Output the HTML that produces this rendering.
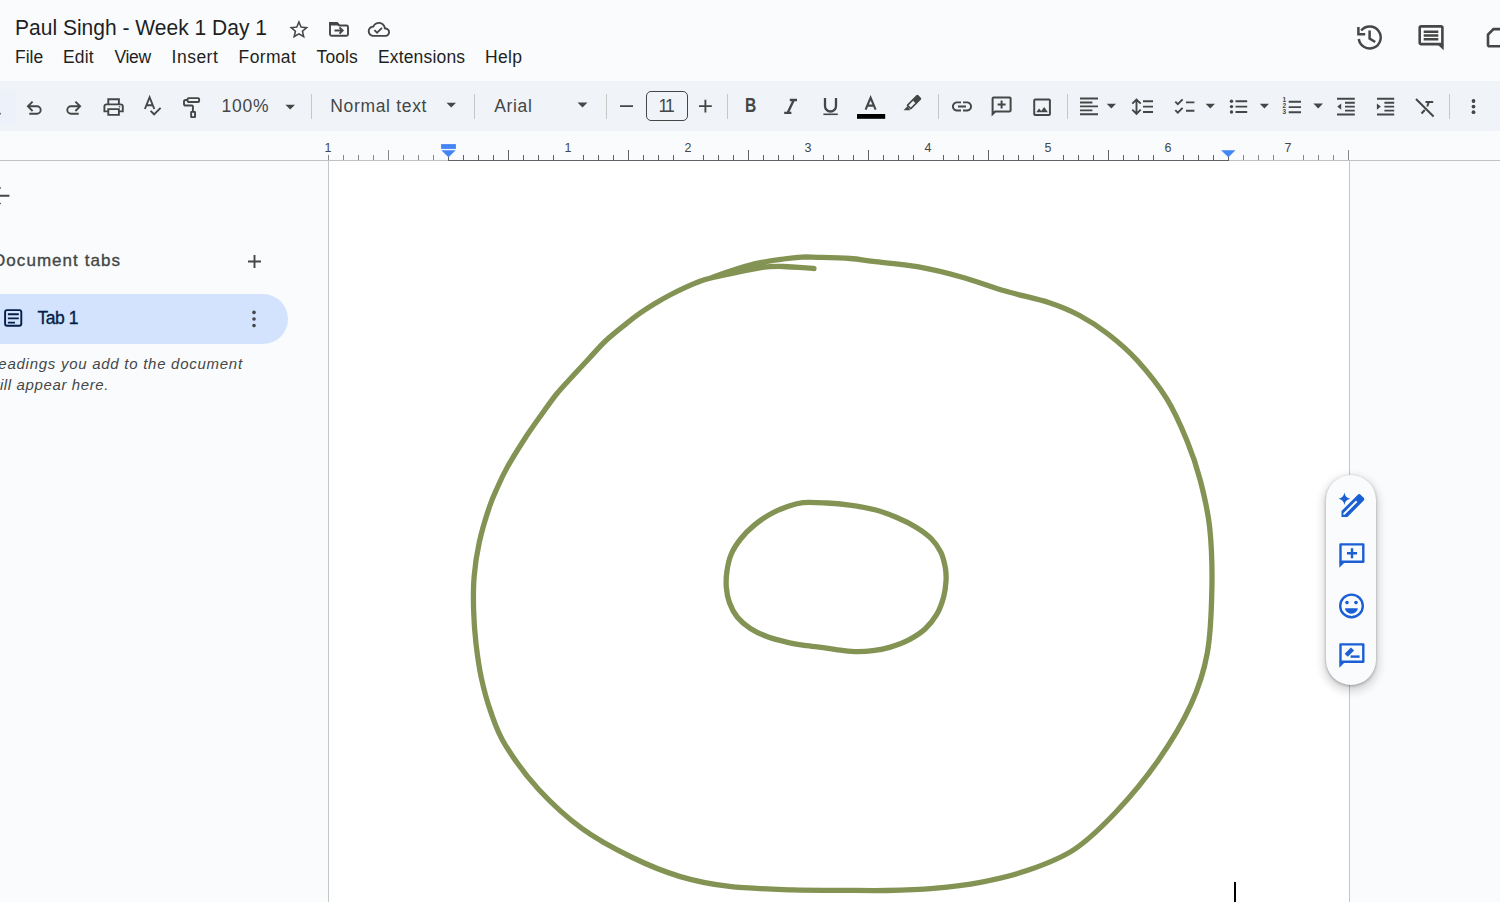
<!DOCTYPE html>
<html lang="en"><head><meta charset="utf-8"><title>Paul Singh - Week 1 Day 1</title>
<style>
html,body{margin:0;padding:0}
body{width:1500px;height:902px;overflow:hidden;position:relative;background:#f9fbfd;font-family:"Liberation Sans",sans-serif;color:#1f1f1f}
.a{position:absolute;white-space:nowrap;line-height:1}
svg{position:absolute;overflow:visible}
.ic{fill:#444746}
#title{left:14.5px;top:16px;font-size:22.5px;color:#1f1f1f}
.m{top:49px;font-size:17.5px;color:#1f1f1f}
#tb{left:-30px;top:81px;width:1560px;height:50px;background:#f0f4f9;border-radius:25px}
.tt{font-size:17.5px;color:#444746;top:98px}
.sep{width:1px;height:25px;top:94px;background:#c7c7c7}
.num{font-size:12.5px;color:#444746;top:142px;width:20px;text-align:center}
</style></head><body>
<!-- header -->
<div class="a t" id="t_title" style="left:14.800px;top:17px;font-size:22.500px;transform:scaleX(.934);transform-origin:0 0">Paul Singh - Week 1 Day 1</div>
<div class="a t m" id="t_file" style="left:15.00px;letter-spacing:0.000px">File</div>
<div class="a t m" id="t_edit" style="left:62.90px;letter-spacing:0.199px">Edit</div>
<div class="a t m" id="t_view" style="left:114.40px;letter-spacing:-0.267px">View</div>
<div class="a t m" id="t_insert" style="left:171.60px;letter-spacing:0.480px">Insert</div>
<div class="a t m" id="t_format" style="left:238.60px;letter-spacing:0.360px">Format</div>
<div class="a t m" id="t_tools" style="left:316.60px;letter-spacing:0.100px">Tools</div>
<div class="a t m" id="t_ext" style="left:377.90px;letter-spacing:0.177px">Extensions</div>
<div class="a t m" id="t_help" style="left:485.00px;letter-spacing:0.333px">Help</div>
<!-- toolbar -->
<div class="a" id="tb"></div>
<div class="a" style="left:-20px;top:89px;width:36.200px;height:34.800px;background:#edf2fa;border-radius:2px"></div>
<div class="a t tt" id="t_zoom" style="left:221.40px;letter-spacing:0.800px">100%</div>
<div class="a t tt" id="t_normal" style="left:330.20px;letter-spacing:0.680px">Normal text</div>
<div class="a t tt" id="t_arial" style="left:494.20px;letter-spacing:0.650px">Arial</div>
<div class="a sep" style="left:311px"></div>
<div class="a sep" style="left:474px"></div>
<div class="a sep" style="left:606px"></div>
<div class="a sep" style="left:727px"></div>
<div class="a sep" style="left:938px"></div>
<div class="a sep" style="left:1067px"></div>
<div class="a sep" style="left:1449px"></div>
<div class="a" style="left:646px;top:91px;width:42px;height:29.500px;border:1px solid #444746;border-radius:5px;box-sizing:border-box"></div>
<div class="a t tt" id="t_11" style="left:658.4px;letter-spacing:-1.7px">11</div>
<div class="a" style="left:745px;top:96.300px;font-size:19.500px;font-weight:bold;color:#444746;transform:scaleX(.80);transform-origin:0 0">B</div>
<div class="a" style="left:1282.5px;top:97px;font-size:6.5px;font-weight:bold;color:#444746;line-height:6.1px;white-space:normal;width:5px">1<br>2<br>3</div>
<!-- ruler -->
<div class="a" style="left:0;top:160px;width:1500px;height:1px;background:#c1c3c2"></div>
<div class="a" style="left:448px;top:160px;width:781px;height:1px;background:#5f6368"></div>
<svg id="ruler" style="left:0;top:0" width="1500" height="902" viewBox="0 0 1500 902" fill="none" stroke-width="1"><path d="M343.5 155 V160" stroke="#85888a"/><path d="M358.5 155 V160" stroke="#85888a"/><path d="M373.5 155 V160" stroke="#85888a"/><path d="M388.5 150 V160" stroke="#85888a"/><path d="M403.5 155 V160" stroke="#85888a"/><path d="M418.5 155 V160" stroke="#85888a"/><path d="M433.5 155 V160" stroke="#85888a"/><path d="M448.5 157 V160" stroke="#5f6368"/><path d="M463.5 155 V160" stroke="#5f6368"/><path d="M478.5 155 V160" stroke="#5f6368"/><path d="M493.5 155 V160" stroke="#5f6368"/><path d="M508.5 150 V160" stroke="#5f6368"/><path d="M523.5 155 V160" stroke="#5f6368"/><path d="M538.5 155 V160" stroke="#5f6368"/><path d="M553.5 155 V160" stroke="#5f6368"/><path d="M583.5 155 V160" stroke="#5f6368"/><path d="M598.5 155 V160" stroke="#5f6368"/><path d="M613.5 155 V160" stroke="#5f6368"/><path d="M628.5 150 V160" stroke="#5f6368"/><path d="M643.5 155 V160" stroke="#5f6368"/><path d="M658.5 155 V160" stroke="#5f6368"/><path d="M673.5 155 V160" stroke="#5f6368"/><path d="M703.5 155 V160" stroke="#5f6368"/><path d="M718.5 155 V160" stroke="#5f6368"/><path d="M733.5 155 V160" stroke="#5f6368"/><path d="M748.5 150 V160" stroke="#5f6368"/><path d="M763.5 155 V160" stroke="#5f6368"/><path d="M778.5 155 V160" stroke="#5f6368"/><path d="M793.5 155 V160" stroke="#5f6368"/><path d="M823.5 155 V160" stroke="#5f6368"/><path d="M838.5 155 V160" stroke="#5f6368"/><path d="M853.5 155 V160" stroke="#5f6368"/><path d="M868.5 150 V160" stroke="#5f6368"/><path d="M883.5 155 V160" stroke="#5f6368"/><path d="M898.5 155 V160" stroke="#5f6368"/><path d="M913.5 155 V160" stroke="#5f6368"/><path d="M943.5 155 V160" stroke="#5f6368"/><path d="M958.5 155 V160" stroke="#5f6368"/><path d="M973.5 155 V160" stroke="#5f6368"/><path d="M988.5 150 V160" stroke="#5f6368"/><path d="M1003.5 155 V160" stroke="#5f6368"/><path d="M1018.5 155 V160" stroke="#5f6368"/><path d="M1033.5 155 V160" stroke="#5f6368"/><path d="M1063.5 155 V160" stroke="#5f6368"/><path d="M1078.5 155 V160" stroke="#5f6368"/><path d="M1093.5 155 V160" stroke="#5f6368"/><path d="M1108.5 150 V160" stroke="#5f6368"/><path d="M1123.5 155 V160" stroke="#5f6368"/><path d="M1138.5 155 V160" stroke="#5f6368"/><path d="M1153.5 155 V160" stroke="#5f6368"/><path d="M1183.5 155 V160" stroke="#5f6368"/><path d="M1198.5 155 V160" stroke="#5f6368"/><path d="M1213.5 155 V160" stroke="#5f6368"/><path d="M1228.5 157 V160" stroke="#5f6368"/><path d="M1243.5 155 V160" stroke="#85888a"/><path d="M1258.5 155 V160" stroke="#85888a"/><path d="M1273.5 155 V160" stroke="#85888a"/><path d="M1303.5 155 V160" stroke="#85888a"/><path d="M1318.5 155 V160" stroke="#85888a"/><path d="M1333.5 155 V160" stroke="#85888a"/><path d="M1348.5 150 V160" stroke="#85888a"/><path d="M328.5 155V160" stroke="#85888a"/></svg>
<div class="a num" style="left:318px">1</div>
<div class="a num" style="left:558px">1</div>
<div class="a num" style="left:678px">2</div>
<div class="a num" style="left:798px">3</div>
<div class="a num" style="left:918px">4</div>
<div class="a num" style="left:1038px">5</div>
<div class="a num" style="left:1158px">6</div>
<div class="a num" style="left:1278px">7</div>
<!-- page -->
<div class="a" style="left:328px;top:161px;width:1022px;height:760px;background:#fff;border-left:1px solid #c4c7c5;border-right:1px solid #c4c7c5;box-sizing:border-box"></div>
<!-- sidebar -->
<div class="a" style="left:-40px;top:294px;width:328px;height:50px;border-radius:25px;background:#d3e3fd"></div>
<div class="a t" id="t_doctabs" style="left:-7px;top:252px;font-size:17px;color:#444746;-webkit-text-stroke:.35px #444746;letter-spacing:1.05px">Document tabs</div>
<div class="a t" id="t_tab1" style="left:37.40px;top:309.5px;font-size:17.5px;color:#041e49;-webkit-text-stroke:.35px #041e49;letter-spacing:-0.400px">Tab 1</div>
<div class="a t" id="t_h1" style="left:-13.21px;top:356.3px;font-size:15px;font-style:italic;color:#444746;letter-spacing:0.730px">Headings you add to the document</div>
<div class="a t" id="t_h2" style="left:-11.56px;top:377.3px;font-size:15px;font-style:italic;color:#444746;letter-spacing:0.622px">will appear here.</div>
<!-- drawing -->
<svg id="draw" style="left:0;top:0" width="1500" height="902" viewBox="0 0 1500 902" fill="none" stroke="#839353" stroke-width="5.3" stroke-linecap="round" stroke-linejoin="round">
<path d="M711.5 277.7C714.1 276.8 720.0 274.3 727.3 272.0C734.6 269.7 746.0 265.9 755.4 263.7C764.8 261.5 775.6 260.1 783.4 259.0C791.2 257.9 796.3 257.4 802.0 257.1C807.7 256.8 809.6 257.1 817.6 257.3C825.6 257.5 840.7 257.8 850.0 258.5C859.3 259.2 862.1 260.0 873.3 261.4C884.5 262.8 902.6 264.1 917.3 266.7C932.0 269.3 946.6 272.9 961.3 277.0C976.0 281.1 990.6 286.7 1005.3 291.0C1020.0 295.3 1037.1 298.7 1049.3 302.7C1061.5 306.7 1068.9 309.8 1078.7 315.0C1088.5 320.2 1098.2 326.4 1108.0 334.0C1117.8 341.6 1127.5 349.7 1137.3 360.5C1147.1 371.3 1158.4 385.2 1166.7 398.7C1175.0 412.1 1181.6 427.6 1187.2 441.2C1192.8 454.8 1196.5 465.7 1200.2 480.0C1203.9 494.3 1207.6 508.9 1209.6 526.8C1211.5 544.7 1212.3 566.6 1211.9 587.6C1211.5 608.6 1210.8 633.5 1207.3 653.0C1203.8 672.5 1199.1 686.6 1190.9 704.6C1182.7 722.6 1170.5 742.8 1158.0 760.7C1145.5 778.6 1130.0 797.2 1116.0 812.0C1102.0 826.8 1088.8 839.8 1074.0 849.6C1059.2 859.4 1042.6 865.2 1027.0 870.6C1011.4 876.0 996.0 879.3 980.4 882.3C964.8 885.3 949.2 887.0 933.6 888.4C918.0 889.8 902.4 890.2 886.8 890.5C871.2 890.8 855.6 890.4 840.0 890.3C824.4 890.2 811.5 890.5 793.0 889.9C774.5 889.2 748.1 888.6 729.3 886.4C710.5 884.2 696.6 881.5 680.3 876.6C664.0 871.7 647.7 865.0 631.3 857.0C614.9 849.0 597.3 839.7 581.8 828.4C566.3 817.1 551.3 803.2 538.5 789.3C525.7 775.4 513.2 757.8 505.2 744.8C497.2 731.8 494.5 722.2 490.5 711.0C486.5 699.8 483.6 688.5 481.2 677.3C478.8 666.0 477.3 654.8 476.0 643.5C474.7 632.2 473.9 621.0 473.6 609.8C473.3 598.5 473.2 587.2 474.2 576.0C475.1 564.8 476.8 553.8 479.3 542.3C481.8 530.8 486.3 516.2 489.4 507.0C492.4 497.8 494.6 493.7 497.6 487.0C500.6 480.3 502.8 475.2 507.4 467.0C512.0 458.8 519.7 446.5 525.2 438.0C530.7 429.5 535.3 423.3 540.5 416.0C545.7 408.7 551.2 400.7 556.6 394.0C562.0 387.3 567.5 381.8 573.0 375.8C578.5 369.8 584.0 363.9 589.5 358.0C595.0 352.1 599.9 346.2 606.0 340.5C612.1 334.8 620.3 328.4 626.0 323.9C631.7 319.3 635.2 316.6 640.0 313.2C644.8 309.8 650.0 306.5 655.0 303.5C660.0 300.5 665.0 297.6 670.0 295.0C675.0 292.4 680.0 290.0 685.0 287.7C690.0 285.4 695.7 282.9 700.0 281.3C704.3 279.7 706.5 279.1 711.0 278.0C715.5 276.9 718.7 276.2 727.0 274.5C735.3 272.8 751.6 268.8 761.0 267.5C770.4 266.2 774.6 266.3 783.4 266.5C792.2 266.7 808.9 268.2 814.0 268.5"/>
<path d="M803.1 502.6C809.6 502.0 818.6 502.6 826.4 503.0C834.1 503.4 841.5 504.0 849.6 505.1C857.7 506.2 867.1 507.8 874.9 509.8C882.7 511.8 889.4 514.4 896.2 517.2C903.0 520.1 909.8 523.4 915.6 526.9C921.4 530.4 926.9 534.3 931.1 538.5C935.3 542.7 938.4 547.2 940.8 552.1C943.2 557.0 944.4 562.8 945.3 567.6C946.2 572.5 946.3 576.4 946.0 581.2C945.7 586.1 945.2 591.2 943.7 596.7C942.2 602.2 940.0 608.8 936.9 614.1C933.8 619.4 929.8 624.5 925.3 628.7C920.8 632.9 915.6 636.2 909.8 639.3C904.0 642.4 896.5 645.2 890.4 647.1C884.2 649.0 878.4 649.9 872.9 650.6C867.4 651.4 862.2 651.6 857.4 651.6C852.5 651.6 849.0 651.2 843.8 650.6C838.6 650.0 832.5 648.9 826.4 648.1C820.3 647.3 813.5 646.7 807.0 645.7C800.5 644.7 794.1 643.8 787.6 642.3C781.1 640.8 774.4 639.3 768.2 637.0C762.1 634.7 755.9 632.0 750.7 628.7C745.5 625.4 740.8 621.4 737.2 617.0C733.7 612.6 731.2 607.5 729.4 602.5C727.6 597.5 726.7 592.2 726.3 587.0C725.9 581.8 726.1 577.0 726.9 571.5C727.7 566.0 728.9 559.5 731.3 554.0C733.6 548.5 737.1 543.4 741.0 538.5C744.9 533.6 749.8 528.9 754.6 524.9C759.5 520.9 764.6 517.3 770.1 514.2C775.6 511.1 782.1 508.4 787.6 506.5C793.1 504.6 796.6 503.2 803.1 502.6Z"/>
</svg>
<div class="a" style="left:1234.200px;top:882px;width:2px;height:20px;background:#000"></div>
<!-- floating pill -->
<div class="a" style="left:1326px;top:475px;width:50px;height:210px;border-radius:25px;background:#f9fbfd;box-shadow:0 1px 3px rgba(0,0,0,.3),0 4px 8px 3px rgba(0,0,0,.15)"></div>
<svg id="icons" style="left:0;top:0" width="1500" height="902" viewBox="0 0 1500 902">
<g fill="none" stroke="#444746" stroke-width="1.9">
<!-- back arrow (cut) -->
<path d="M-7 195.700H9.400M0.400 187.200L-8.100 195.700L0.400 204.200" stroke-width="2"/>
<!-- undo / redo -->
<path d="M32.6 101.6L27.9 106.3L32.6 111M28.2 106.3H37A3.7 3.7 0 0 1 37 113.7H29.3"/>
<path d="M75.4 101.6L80.1 106.3L75.4 111M79.8 106.3H71A3.7 3.7 0 0 0 71 113.7H78.7"/>
<!-- print -->
<path d="M108.3 104V99.2H118.9V104M108.3 111.4H104.4V106.6A2.2 2.2 0 0 1 106.6 104.4H120.6A2.2 2.2 0 0 1 122.8 106.6V111.4H118.9M108.3 109.1H118.9V114.9H108.3Z"/>
<!-- spellcheck -->
<path d="M144.9 109L149.6 97.2L154.3 109M146.6 105.2H152.6M150.6 110.9L154.1 114.3L160.6 107.8"/>
<!-- paint roller -->
<rect x="187.6" y="98.1" width="11.5" height="3.9" rx="1"/>
<path d="M187.6 100H185.6A1.6 1.6 0 0 0 184 101.600V103.900A1.600 1.600 0 0 0 185.600 105.500H191.900A1 1 0 0 1 192.900 106.500V111.500"/>
<rect x="191.150" y="111.900" width="3.900" height="5.200" rx="0.300"/>
<!-- minus / plus -->
<path d="M620 106.100H633M699 106.100H711.800M705.400 99.700V112.500"/>
<!-- italic -->
<path d="M789.800 100H797M784.200 112.900H791.400M793.800 100L787.600 112.900" stroke-width="2.400"/>
<!-- underline -->
<path d="M825 98V106A5.500 5.500 0 0 0 836 106V98" stroke-width="2.300"/><path d="M823.400 114.300H837.800" stroke-width="1.600"/>
<!-- A color -->
<path d="M865.600 109.600L870.600 97.800L875.600 109.600M867.300 105.600H873.900" stroke-width="2.100"/>
<!-- align -->
<path d="M1080 98.500H1098M1080 102.450H1092.400M1080 106.400H1098M1080 110.350H1092.400M1080 114.300H1098"/>
<!-- line spacing -->
<path d="M1136.500 100.500V112.800M1132.300 103.700L1136.500 99.500L1140.700 103.700M1132.300 109.600L1136.500 113.800L1140.700 109.600M1143 101.300H1153M1143 106.600H1153M1143 112H1153"/>
<!-- checklist -->
<path d="M1175.300 101.600L1177.800 104.100L1182.600 99.300M1175.300 110.100L1177.800 112.600L1182.600 107.800M1186 102.400H1194.400M1186 110.700H1194.400"/>
<!-- bullets -->
<path d="M1235.500 101.300H1247.200M1235.500 106.600H1247.200M1235.500 112H1247.200"/>
<!-- numbered -->
<path d="M1288.700 101.800H1301M1288.700 107.100H1301M1288.700 112.300H1301"/>
<!-- indent dec -->
<path d="M1337 98.700H1354.800M1337 114.500H1354.800M1345 102.700H1354.800M1345 106.600H1354.800M1345 110.600H1354.800"/>
<!-- indent inc -->
<path d="M1377 98.700H1394.200M1377 114.500H1394.200M1384.400 102.700H1394.200M1384.400 106.600H1394.200M1384.400 110.600H1394.200"/>
<!-- clear format -->
<path d="M1416 99L1433.600 116.500M1425.500 102H1433.200M1428.600 102.500L1427.300 106.500M1424.800 110L1421.500 113.500" stroke-width="2"/>
<!-- + sidebar -->
<path d="M248 261.500H261M254.500 255V268"/>
<!-- folder move -->
<path d="M330 23H337L339.300 25.500H346.500A1.500 1.500 0 0 1 348 27V34.200A1.500 1.500 0 0 1 346.500 35.700H331.500A1.500 1.500 0 0 1 330 34.200Z"/>
<path d="M334.500 30.500H342.500M339.500 27.300L342.700 30.500L339.500 33.700"/>
<!-- history -->
<path d="M1358.800 39A11 11 0 1 0 1361.200 30.500M1358.400 27V34.300H1365.200M1369.600 30.500V38.500L1375.200 42" stroke-width="2.500"/>
<!-- comment -->
<path d="M1421.200 26.400H1440.900A1.500 1.500 0 0 1 1442.400 27.900V44.100H1421.200A1.500 1.500 0 0 1 1419.700 42.600V27.900A1.500 1.500 0 0 1 1421.200 26.400Z" stroke-width="2.600"/>
<path d="M1423.700 31.700H1438.300M1423.700 35.500H1438.300M1423.700 39.200H1438.300" stroke-width="2.500"/>
<!-- meet partial -->
<path d="M1502 29.100H1493.500L1488 34.600V44.800A1.500 1.500 0 0 0 1489.500 46.300H1502" stroke-width="2.600"/>
</g>
<g fill="#444746">
<path d="M329.200 22.200H337.300L340 25.500H329.200Z"/>
<path d="M1437.500 44.500H1443.700V50.200Z"/>
<!-- dropdown arrows -->
<path d="M285.400 104.800H295L290.200 109.600Z"/>
<path d="M446.500 102.700H456L451.250 107.500Z"/>
<path d="M577.500 102.500H587.500L582.500 107.600Z"/>
<path d="M1106.700 103.700H1116L1111.350 108.600Z"/>
<path d="M1205.600 103.700H1215L1210.300 108.600Z"/>
<path d="M1259.800 103.700H1269L1264.400 108.600Z"/>
<path d="M1313.400 103.500H1323L1318.200 108.500Z"/>
<!-- indent triangles -->
<path d="M1337.300 106.600L1341.200 103.400V109.800Z"/>
<path d="M1380.800 106.600L1376.900 103.400V109.800Z"/>
<!-- bullets dots -->
<circle cx="1231.500" cy="101.300" r="1.700"/><circle cx="1231.500" cy="106.600" r="1.700"/><circle cx="1231.500" cy="112" r="1.700"/>
<!-- more vert -->
<circle cx="1473.500" cy="101" r="1.900"/><circle cx="1473.500" cy="106.600" r="1.900"/><circle cx="1473.500" cy="112.200" r="1.900"/>
<circle cx="254" cy="312.400" r="1.800"/><circle cx="254" cy="319" r="1.800"/><circle cx="254" cy="325.600" r="1.800"/>
<!-- printer dot -->
<circle cx="119.600" cy="106.800" r="0.800"/>
<!-- highlighter -->
<g transform="translate(908.5,107.6) rotate(-45)"><path fill-rule="evenodd" d="M1.2 -3.2H14.2A1.5 1.5 0 0 1 15.700 -1.700V1.700A1.500 1.500 0 0 1 14.200 3.200H1.200A1.200 1.200 0 0 1 0 2V-2A1.200 1.200 0 0 1 1.200 -3.200ZM1.700 -1.500V1.500H8.100V-1.500Z"/></g>
<path d="M903.600 110.300L907.300 106.300L910.300 110.300Z"/>
<!-- star -->
<path transform="translate(287.400,18.100) scale(0.96)" d="M22 9.240l-7.190-.620L12 2 9.190 8.630 2 9.240l5.460 4.730L5.820 21 12 17.270 18.180 21l-1.630-7.030L22 9.240zM12 15.400l-3.760 2.270 1-4.280-3.320-2.880 4.380-.380L12 6.100l1.710 4.040 4.380.380-3.320 2.880 1 4.280L12 15.400z"/>
<!-- cloud done -->
<path transform="translate(367.800,18.300) scale(0.925)" d="M19.350 10.040C18.670 6.590 15.640 4 12 4 9.110 4 6.600 5.640 5.350 8.040 2.340 8.360 0 10.910 0 14c0 3.310 2.690 6 6 6h13c2.760 0 5-2.240 5-5 0-2.640-2.050-4.780-4.650-4.960zM19 18H6c-2.210 0-4-1.790-4-4 0-2.050 1.530-3.760 3.560-3.970l1.070-.110.500-.950C8.080 7.140 9.940 6 12 6c2.620 0 4.880 1.860 5.390 4.430l.300 1.500 1.530.110c1.560.100 2.780 1.410 2.780 2.960 0 1.650-1.350 3-3 3zm-9-3.820l-2.090-2.090L6.500 13.500 10 17l6.010-6.010-1.410-1.410z"/>
<!-- link -->
<path transform="translate(950,94.400)" d="M3.900 12c0-1.710 1.390-3.100 3.100-3.100h4V7H7c-2.760 0-5 2.240-5 5s2.240 5 5 5h4v-1.900H7c-1.710 0-3.100-1.390-3.100-3.100zM8 13h8v-2H8v2zm9-6h-4v1.900h4c1.710 0 3.100 1.390 3.100 3.100s-1.390 3.100-3.100 3.100h-4V17h4c2.760 0 5-2.240 5-5s-2.240-5-5-5z"/>
<!-- add comment -->
<path transform="translate(989.600,94.400)" d="M11 14h2v-3h3V9h-3V6h-2v3H8v2h3v3Zm-9 8V4q0-.825.588-1.413T4 2h16q.825 0 1.413.587T22 4v12q0 .825-.587 1.413T20 18H6l-4 4Zm3.150-6H20V4H4v13.125L5.150 16Z" fill-rule="evenodd"/>
<!-- image -->
<path transform="translate(1030.300,95.500) scale(0.98)" d="M19 5v14H5V5h14m0-2H5c-1.100 0-2 .9-2 2v14c0 1.100.9 2 2 2h14c1.100 0 2-.9 2-2V5c0-1.100-.9-2-2-2zm-4.860 8.860l-3 3.870L9 13.140 6 17h12l-3.860-5.140z"/>
</g>
<rect x="-1" y="112.800" width="1.900" height="1.700" fill="#5f6368"/>
<!-- text color bar -->
<rect x="857" y="114" width="28.200" height="4.800" fill="#000"/>
<!-- tab icon -->
<g fill="none" stroke="#041e49" stroke-width="1.900">
<rect x="5.100" y="310.100" width="16.200" height="15.700" rx="2"/>
<path d="M7.900 314.200H18.800M7.900 318.400H18.800M7.900 322.600H15"/>
</g>
<!-- ruler markers -->
<g fill="#4285f4">
<rect x="441.100" y="144.100" width="14.800" height="4.800"/>
<path d="M441.300 150.200H455.700L448.500 157.300Z"/>
<path d="M1221.100 150.200H1235.500L1228.400 157.300Z"/>
</g>
<!-- pill icons -->
<g fill="none" stroke="#1a5fd3" stroke-width="2.400">
<path d="M1340.500 544.400H1363.300V561.800H1340.500Z" stroke-linejoin="round"/>
<path d="M1347 553.300H1357M1352 548.300V558.300"/>
<circle cx="1351.500" cy="605.900" r="11.300"/>
<path d="M1340.500 644.400H1363.300V661.800H1340.500Z" stroke-linejoin="round"/>
<path d="M1350.500 656.600H1359.600"/>
<path d="M1346.200 655.200L1352.500 649" stroke-width="4.400"/>
</g>
<g fill="#1a5fd3">
<path d="M1339.300 561.800V567.800L1345.300 561.800Z"/>
<path d="M1339.300 661.800V667.800L1345.300 661.800Z"/>
<circle cx="1347" cy="602.600" r="1.800"/><circle cx="1356" cy="602.600" r="1.800"/>
<path d="M1345 608.300H1357.800A6.400 5.400 0 0 1 1345 608.300Z"/>
<path d="M1344.400 492.500Q1345.200 497.900 1350.400 498.700Q1345.200 499.500 1344.400 504.900Q1343.600 499.500 1338.400 498.700Q1343.600 497.900 1344.400 492.500Z"/>
<path fill-rule="evenodd" d="M1341.500 516.900V511L1357.600 494.900Q1359.200 493.300 1360.800 494.900L1363.500 497.600Q1365.100 499.200 1363.500 500.800L1347.400 516.900ZM1343.300 513.300L1356 500.600L1357.400 502L1344.600 514.800H1343.300Z"/>
</g>
</svg>
</body></html>
